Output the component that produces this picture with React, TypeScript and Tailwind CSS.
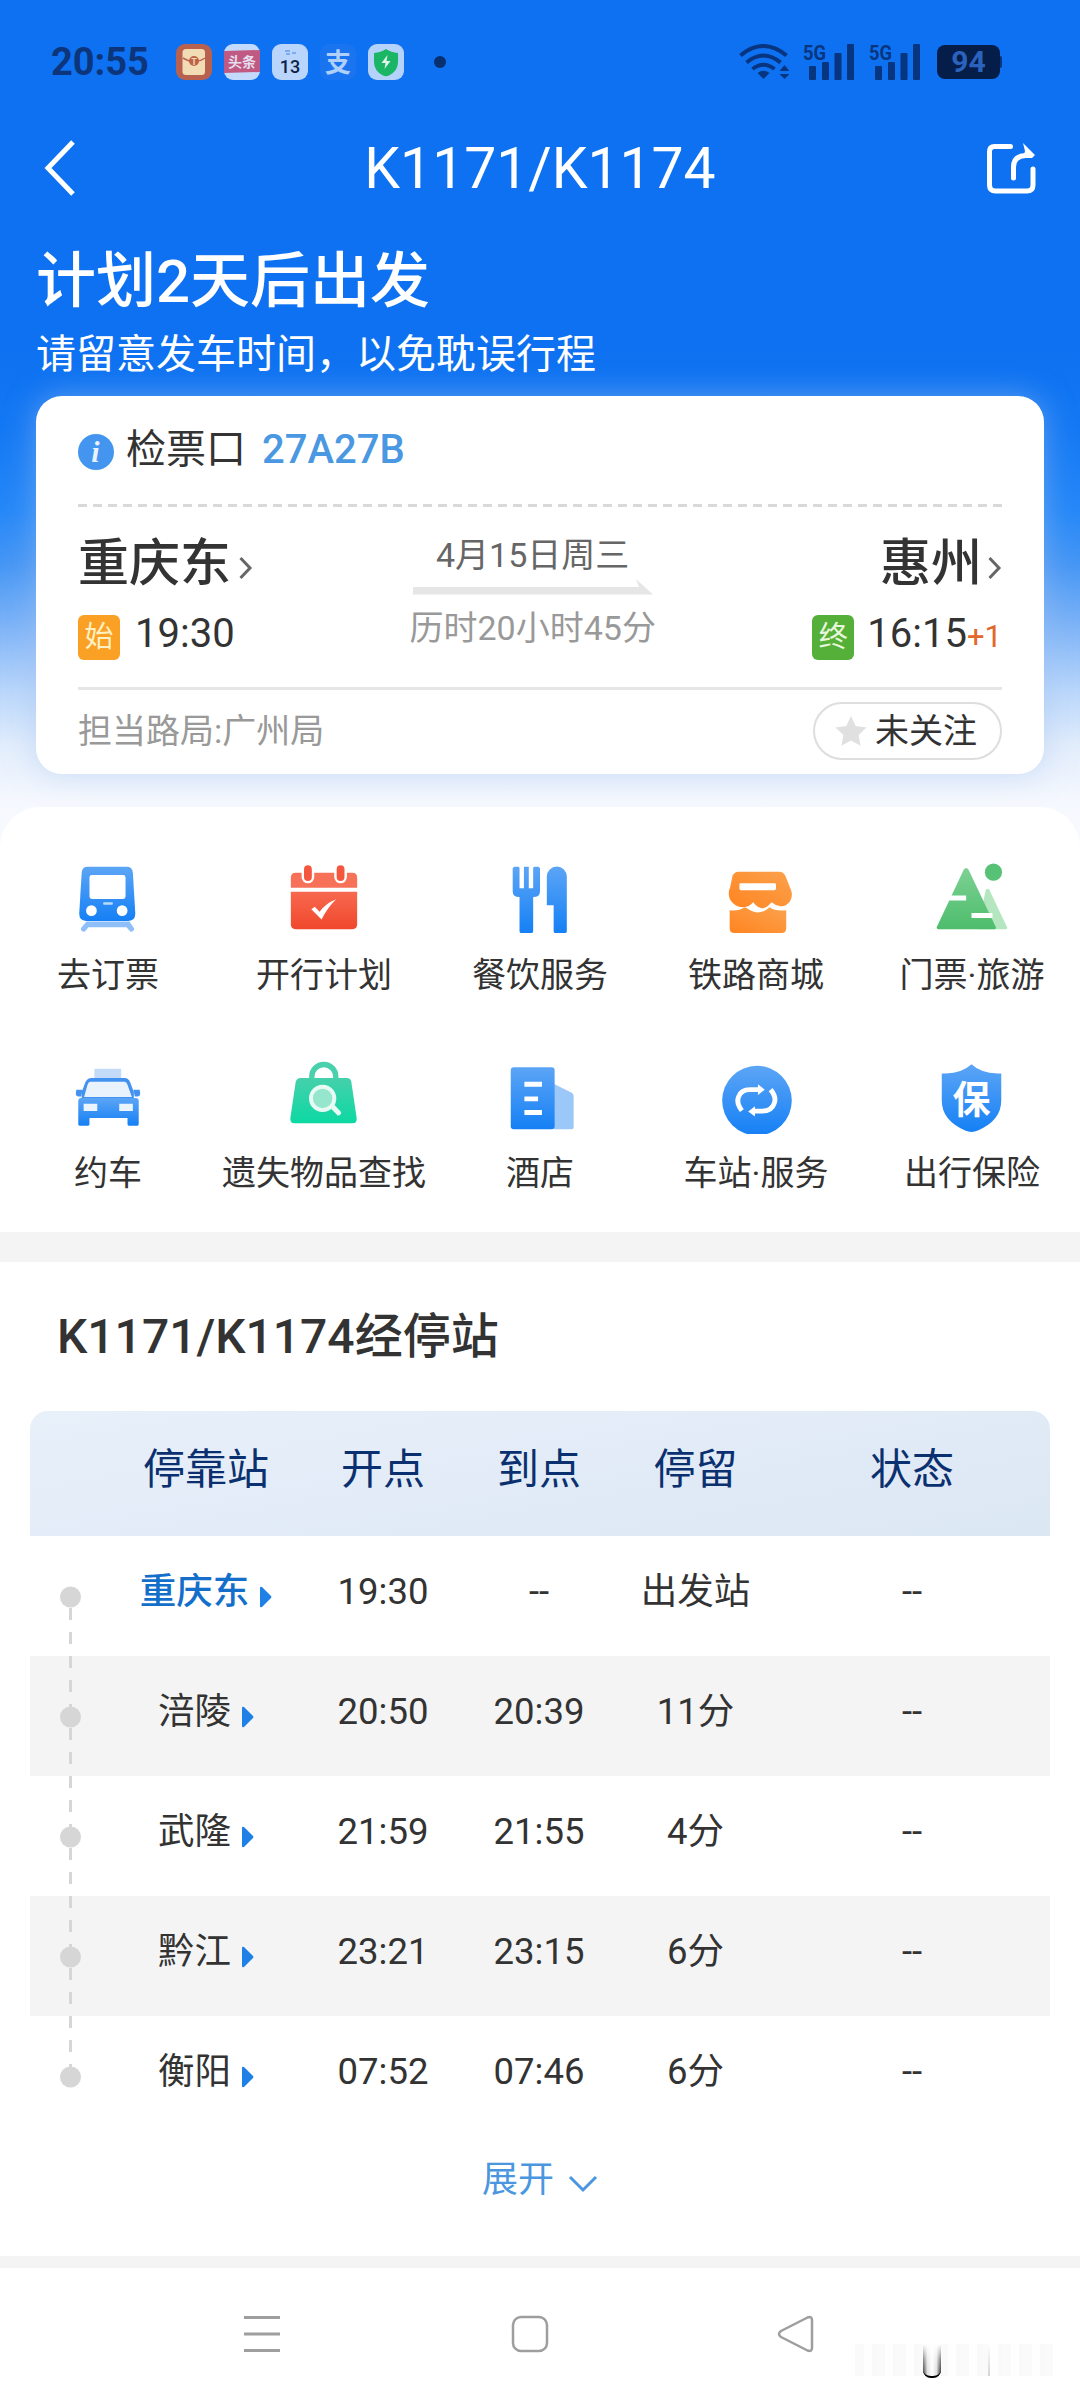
import React from 'react';

interface Service {
  label: string;
  icon: React.ReactNode;
}

interface Stop {
  name: string;
  depart: string;
  arrive: string;
  stay: string;
  status: string;
}

const TrainIcon = () => (
  <svg viewBox="0 0 80 80" className="h-20 w-20">
    <path d="M18 65h44l4 6a2.5 2.5 0 0 1-4 3.5L59 71H20l-3 3.5a2.5 2.5 0 0 1-4-3.5z" fill="#8fbff8" />
    <path d="M19 9h40q6 0 6.5 6l2.5 42q0 7.500-7 7.500H17.500q-7 0-7-7.500l2.500-42q.5-6 6-6z" fill="url(#blue)" />
    <rect x="21" y="17.500" width="37" height="24.500" rx="2.500" fill="#fff" />
    <rect x="35" y="45.500" width="10" height="2.500" rx="1" fill="#b9dafb" />
    <circle cx="23" cy="54" r="5.500" fill="#fff" />
    <circle cx="54.500" cy="54" r="5.500" fill="#fff" />
  </svg>
);

const CalendarIcon = () => (
  <svg viewBox="0 0 80 80" className="h-20 w-20">
    <path d="M11 15h58q5 0 5 5v10.500H6V20q0-5 5-5z" fill="#f77158" />
    <path d="M6 34.500h68V68q0 5-5 5H11q-5 0-5-5z" fill="url(#red)" />
    <rect x="17" y="4" width="13" height="22" rx="6.500" fill="#fff" />
    <rect x="50.500" y="4" width="13" height="22" rx="6.500" fill="#fff" />
    <rect x="19.500" y="7.500" width="8" height="16" rx="4" fill="#f4573d" />
    <rect x="53" y="7.500" width="8" height="16" rx="4" fill="#f4573d" />
    <path d="M27 52.500l3.500-2.500 5 5q6-8.500 17-12.800Q44 50 37.500 63z" fill="#fff" />
  </svg>
);

const FoodIcon = () => (
  <svg viewBox="0 0 80 80" className="h-20 w-20">
    <path d="M13.500 9h4.500l1 1v21h4.500V9h5v22H33V10l1-1h4.500l1.500 1.500V34q0 6-7 6v35q0 2-2 2H21q-2 0-2-2V40q-7 0-7-6V10.500z" fill="url(#blue)" />
    <path d="M47 48.500V19a10.200 10.200 0 0 1 20.500 0v56q0 2-2 2H56q-2 0-2-2V48.500z" fill="url(#blue)" />
  </svg>
);

const ShopIcon = () => (
  <svg viewBox="0 0 80 80" className="h-20 w-20">
    <path d="M22 14h42q4 0 6 4l6 15q2 6-1 11-4 6-10 5.500-5-.5-9-4-5 6-9.500 6t-9.500-6q-4 5-10 5-6.500 0-10.500-4-7-7-3-16.500L16 18q2-4 6-4z" fill="url(#orange)" />
    <path d="M13 53.500q8 1.500 16-3 7 5 12.500 5.500 6.500 0 12.500-5.500 6 4.500 17 3V72q0 5-5 5H18q-5 0-5-5z" fill="url(#orange)" />
    <rect x="23" y="26" width="37.500" height="7" rx="1.500" fill="#fff" />
  </svg>
);

const TravelIcon = () => (
  <svg viewBox="0 0 80 80" className="h-20 w-20">
    <path d="M54 33q2-3 4 0l18 38q.5 2-1.500 2H46z" fill="#b4e6c0" />
    <path d="M31.500 12q2.500-3.500 5 0l28 59q.5 2-1.500 2H6q-3 0-2-2.500z" fill="url(#green)" />
    <circle cx="62" cy="14.500" r="8.800" fill="#57c176" />
    <path d="M16 38.500h18v5H16zM39.500 56.500H61v5H39.500z" fill="#fff" />
  </svg>
);

const TaxiIcon = () => (
  <svg viewBox="0 0 80 80" className="h-20 w-20">
    <rect x="26" y="13" width="27.500" height="10" rx="1" fill="#c3dbf8" />
    <path d="M23 22.500h34q4 0 5.500 4l4 10.500v6H13v-6l4-10.500q2-4 6-4z" fill="#4392f0" />
    <path d="M22 26.500h35q2 0 3 3l4.500 12.500h-49L19 29.500q1-3 3-3z" fill="#e9f3fd" />
    <path d="M7.500 34.500h6.500l-1.500 7H10q-3 0-3-3zM72.500 34.500H66l1.500 7H70q3 0 3-3z" fill="#4392f0" />
    <path d="M12.500 43h56q3 0 3 3v24q0 1.500-1.500 1.500h-8.500q-1.500 0-1.500-1.500v-6.500H21V70q0 1.500-1.500 1.500H11q-1.500 0-1.500-1.500V46q0-3 3-3z" fill="url(#blue)" />
    <path d="M15 49h14v7.500H15zM51.500 49h14v7.500h-14z" fill="#eaf4fe" />
  </svg>
);

const LostIcon = () => (
  <svg viewBox="0 0 80 80" className="h-20 w-20">
    <path d="M27.500 25v-4a12.300 12.300 0 0 1 24.600 0v4" fill="none" stroke="#48d1ac" strokeWidth="5.500" />
    <path d="M16 22.500h47.500q4 0 4.500 4l5.500 37q.5 5.500-4 5.500h-60q-4.500 0-4-5.500l5.500-37q1-4 5-4z" fill="url(#teal)" />
    <path d="M47 50l8 8.500" stroke="#e7fbf4" strokeWidth="5" strokeLinecap="round" />
    <circle cx="38.600" cy="43.500" r="12" fill="#96e6cd" stroke="#e7fbf4" strokeWidth="4" />
  </svg>
);

const HotelIcon = () => (
  <svg viewBox="0 0 80 80" className="h-20 w-20">
    <path d="M54 28.500l17 8.500q3.500 1.500 3.500 4.500V73q0 2-2 2H54z" fill="#9bc8f9" />
    <rect x="10" y="11.500" width="45" height="63.500" rx="3" fill="url(#blue)" />
    <path d="M24 26.500h18v5H24zM24 41.500h14v5H24zM24 55.500h18v5H24z" fill="#fff" />
  </svg>
);

const StationIcon = () => (
  <svg viewBox="0 0 80 80" className="h-20 w-20">
    <circle cx="41" cy="45.700" r="35.700" fill="url(#blue)" />
    <g fill="none" stroke="#fff" strokeWidth="5">
      <path d="M25.500 56q-6-8-3.500-14 2.500-7.500 12-7.500h9" />
      <path d="M55 34.500q6.500 8 3.500 14.500-2.500 7.500-12 7.500H38" />
    </g>
    <path d="M42 29l7 5.500-7 5.500zM39 51.500L32 57l7 5z" fill="#fff" />
  </svg>
);

const InsuranceIcon = () => (
  <svg viewBox="0 0 80 80" className="h-20 w-20">
    <path d="M39.500 8.500Q49 17.500 66 18h4v28q0 20-24 30.500-6.500 3-13 0Q9 66 9 46V18h4q17-.5 26.500-9.500z" fill="url(#blue)" />
    <text x="39.500" y="58" textAnchor="middle" fontSize="39" fontWeight="700" fill="#fff">保</text>
  </svg>
);

const services: Service[] = [
  { label: '去订票', icon: <TrainIcon /> },
  { label: '开行计划', icon: <CalendarIcon /> },
  { label: '餐饮服务', icon: <FoodIcon /> },
  { label: '铁路商城', icon: <ShopIcon /> },
  { label: '门票·旅游', icon: <TravelIcon /> },
  { label: '约车', icon: <TaxiIcon /> },
  { label: '遗失物品查找', icon: <LostIcon /> },
  { label: '酒店', icon: <HotelIcon /> },
  { label: '车站·服务', icon: <StationIcon /> },
  { label: '出行保险', icon: <InsuranceIcon /> }
];

const stops: Stop[] = [
  { name: '重庆东', depart: '19:30', arrive: '--', stay: '出发站', status: '--' },
  { name: '涪陵', depart: '20:50', arrive: '20:39', stay: '11分', status: '--' },
  { name: '武隆', depart: '21:59', arrive: '21:55', stay: '4分', status: '--' },
  { name: '黔江', depart: '23:21', arrive: '23:15', stay: '6分', status: '--' },
  { name: '衡阳', depart: '07:52', arrive: '07:46', stay: '6分', status: '--' }
];

// Shared gradients referenced by the service icons
const Gradients = () => (
  <svg className="absolute h-0 w-0">
    <defs>
      <linearGradient id="blue" x1="0" y1="0" x2="0" y2="1">
        <stop offset="0" stopColor="#5ca5f6" />
        <stop offset="1" stopColor="#1580f5" />
      </linearGradient>
      <linearGradient id="red" x1="0" y1="0" x2="0" y2="1">
        <stop offset="0" stopColor="#f7694f" />
        <stop offset="1" stopColor="#f0482c" />
      </linearGradient>
      <linearGradient id="orange" x1="1" y1="0" x2="0" y2="1">
        <stop offset="0" stopColor="#fba24d" />
        <stop offset="1" stopColor="#ff8420" />
      </linearGradient>
      <linearGradient id="green" x1="0" y1="0" x2="0" y2="1">
        <stop offset="0" stopColor="#7dd193" />
        <stop offset="1" stopColor="#4dbd6c" />
      </linearGradient>
      <linearGradient id="teal" x1="0" y1="0" x2="0" y2="1">
        <stop offset="0" stopColor="#45d0ab" />
        <stop offset="1" stopColor="#0cd9a3" />
      </linearGradient>
    </defs>
  </svg>
);

const Signal = () => (
  <svg viewBox="0 0 54 40" className="h-10 w-[54px]" fill="#08357f">
    <text x="0" y="18" fontSize="21" fontWeight="700" textLength="23" lengthAdjust="spacingAndGlyphs">5G</text>
    <rect x="6" y="24" width="7" height="14" rx="1" />
    <rect x="19" y="20" width="7" height="18" rx="1" />
    <rect x="31.500" y="11" width="7" height="27" rx="1" />
    <rect x="44" y="2" width="7" height="36" rx="1" />
  </svg>
);

const StatusBar = () => (
  <div className="flex h-[124px] items-center pl-[51px] pr-[78px]">
    <span className="w-[125px] text-[38px] font-bold leading-none text-[#0c357b]">20:55</span>
    <div className="flex items-center gap-3">
      <svg viewBox="0 0 36 36" className="h-9 w-9">
        <rect width="36" height="36" rx="9" fill="#b8614f" />
        <rect x="6.500" y="5" width="22.500" height="26" rx="3.500" fill="#f2dcb5" />
        <path d="M7 14q5 3 8 3m6 0q4 0 8-3" stroke="#b8614f" strokeWidth="1.500" fill="none" />
        <circle cx="18" cy="17" r="5" fill="#c06248" />
        <text x="18" y="20.500" textAnchor="middle" fontSize="9" fontWeight="700" fill="#f2dcb5">T</text>
      </svg>
      <svg viewBox="0 0 36 36" className="h-9 w-9">
        <rect width="36" height="36" rx="9" fill="#c3dafc" />
        <path d="M0 7l36-1v22L0 29z" fill="#c05a82" />
        <text x="18" y="23" textAnchor="middle" fontSize="14" fontWeight="700" fill="#e5dff0">头条</text>
      </svg>
      <svg viewBox="0 0 36 36" className="h-9 w-9">
        <rect width="36" height="36" rx="9" fill="#b9d5fc" />
        <path d="M13 7h5M14 10h4M20 9h4" stroke="#6a9cf0" strokeWidth="1.500" />
        <text x="18" y="29" textAnchor="middle" fontSize="18" fontWeight="500" fill="#0b2246">13</text>
      </svg>
      <svg viewBox="0 0 36 36" className="h-9 w-9">
        <rect width="36" height="36" rx="9" fill="#1a74f0" />
        <text x="18" y="27.500" textAnchor="middle" fontSize="26" fontWeight="700" fill="#aed0fb">支</text>
      </svg>
      <svg viewBox="0 0 36 36" className="h-9 w-9">
        <rect width="36" height="36" rx="9" fill="#b5d3fa" />
        <path d="M18 5q5 3.500 12 4v9q0 9-9 13.500-3 1.500-6 0Q6 27 6 18V9q7-.5 12-4z" fill="#1bb566" />
        <path d="M19.500 11l-6 8h4l-1 6 6-8h-4z" fill="#dff5ec" />
      </svg>
      <span className="ml-[18px] h-3 w-3 rounded-full bg-[#08306f]" />
    </div>
    <div className="ml-auto flex items-center">
      <svg viewBox="0 0 50 36" className="h-9 w-[50px]" fill="none" stroke="#08357f" strokeWidth="4">
        <path d="M1.500 11.500q22.500-19 46 0M7.500 18.500q17-14 34 0M13.500 25q11-8.500 22 0" />
        <path d="M24.500 35l-6-6q6-4.500 12 0z" fill="#08357f" stroke="none" />
        <path d="M45.500 21l5 6h-10zM45.500 35l5-5h-10z" fill="#08357f" stroke="none" />
      </svg>
      <div className="ml-3.5 flex gap-3">
        <Signal />
        <Signal />
      </div>
      <div className="ml-[14px] flex h-[34px] w-[63px] items-center justify-center rounded-[8px] bg-[#051d49] text-[30px] font-bold leading-none text-[#2b62bd]">
        94
      </div>
      <span className="h-3 w-0.5 rounded-r bg-[#08357f]" />
    </div>
  </div>
);

const TitleBar = () => (
  <div className="flex h-[88px] items-center justify-between pl-[44px] pr-[44px]">
    <svg viewBox="0 0 50 56" className="h-14 w-[50px]" fill="none" stroke="#fff" strokeWidth="5">
      <path d="M29 2L4 28l25 26" />
    </svg>
    <h1 className="text-[57px] leading-none text-white">K1171/K1174</h1>
    <svg viewBox="0 0 50 52" className="h-[52px] w-[50px]" fill="none" stroke="#fff" strokeWidth="5" strokeLinecap="round" strokeLinejoin="round">
      <path d="M24.500 4.500H8.500q-5 0-5 5V43q0 6 6 6H41q6 0 6-6V27" />
      <path d="M27.500 36V25q0-11 12-11.500h4" />
      <path d="M37 1l12 12-3 3h-9l2-7z" fill="#fff" stroke="none" />
    </svg>
  </div>
);

const Chevron = () => (
  <svg viewBox="0 0 14 24" className="h-6 w-3.5" fill="none" stroke="#666" strokeWidth="3">
    <path d="M1.500 2l9.500 10-9.500 10" />
  </svg>
);

const TripCard = () => (
  <div className="mx-9 flex h-[378px] flex-col rounded-[26px] bg-white px-[42px] shadow-[0_0_30px_rgba(165,195,240,0.5)]">
    <div className="flex h-[108px] items-center text-[40px] leading-none">
      <svg viewBox="0 0 36 36" className="mt-1 h-9 w-9">
        <circle cx="18" cy="18" r="18" fill="#4395f0" />
        <text x="17.500" y="27.500" textAnchor="middle" fontFamily="Liberation Serif, serif" fontStyle="italic" fontWeight="700" fontSize="30" fill="#e8f3fe">i</text>
      </svg>
      <span className="ml-3 text-[#333]">检票口</span>
      <span className="ml-4 font-medium text-[#4a98e2]">27A27B</span>
    </div>
    <div className="h-[3px] bg-[repeating-linear-gradient(90deg,#d9d9d9_0_9px,transparent_9px_15px)]" />
    <div className="flex h-[180px] justify-between">
      <div className="pt-[30px]">
        <div className="flex h-[52px] items-center">
          <span className="text-[51px] font-medium leading-none text-[#333]">重庆东</span>
          <span className="ml-2 mt-2.5"><Chevron /></span>
        </div>
        <div className="mt-[26px] flex items-center">
          <span className="flex h-[45px] w-[42px] items-center justify-center rounded-md bg-[#faa024] text-[29px] leading-none text-[#fdf1c4]">始</span>
          <span className="ml-[15px] -mt-2 text-[40px] leading-none text-[#333]">19:30</span>
        </div>
      </div>
      <div className="flex flex-col items-center pt-[31px]">
        <span className="text-[34px] leading-none text-[#666]">4月15日周三</span>
        <svg viewBox="0 0 240 16" className="mt-[7px] h-4 w-[240px]" fill="#e6e6e6">
          <path d="M0 8h226l-3-8 17 15.500H0z" />
        </svg>
        <span className="mt-4 text-[34px] leading-none text-[#999]">历时20小时45分</span>
      </div>
      <div className="flex flex-col items-end pt-[30px]">
        <div className="flex h-[52px] items-center">
          <span className="text-[51px] font-medium leading-none text-[#333]">惠州</span>
          <span className="ml-1.5 mt-2.5"><Chevron /></span>
        </div>
        <div className="mt-[26px] flex items-center">
          <span className="flex h-[45px] w-[42px] items-center justify-center rounded-md bg-[#55b03a] text-[29px] leading-none text-[#e8f7dc]">终</span>
          <span className="ml-[13px] -mt-2 text-[40px] leading-none text-[#333]">
            16:15<span className="text-[31px] text-[#e2672a]">+1</span>
          </span>
        </div>
      </div>
    </div>
    <div className="h-[3px] bg-[#e6e6e6]" />
    <div className="flex h-[81px] items-center justify-between text-[34px] leading-none">
      <span className="text-[#999]">担当路局:广州局</span>
      <button className="flex h-[58px] w-[189px] items-center rounded-full border-2 border-[#dedede] pl-[20px] text-[#333]">
        <svg viewBox="0 0 32 30" className="h-[30px] w-8" fill="#e0e0e0">
          <path d="M16 0l4.700 10 10.800 1.400-7.900 7.500 2 10.800L16 24.500l-9.600 5.200 2-10.800L.5 11.400 11.300 10z" />
        </svg>
        <span className="ml-2">未关注</span>
      </button>
    </div>
  </div>
);

const ServiceGrid = () => (
  <div className="mt-[33px] grid h-[425px] grid-cols-5 content-start gap-y-[64px] rounded-t-[40px] bg-white pt-[51px]">
    {services.map((service) => (
      <div key={service.label} className="flex h-[134px] flex-col items-center">
        {service.icon}
        <span className="mt-[22px] whitespace-nowrap text-[34px] leading-none text-[#333]">{service.label}</span>
      </div>
    ))}
  </div>
);

const Rail = ({ first, last }: { first: boolean; last: boolean }) => (
  <svg viewBox="0 0 77 120" className="h-[120px] w-[77px]">
    <path
      d={last ? 'M40.500 0v60' : first ? 'M40.500 72v48' : 'M40.500 0v120'}
      stroke="#d6d6d6"
      strokeWidth="3"
      strokeDasharray="12 12"
    />
    <circle cx="40.500" cy="61" r="10.500" fill="#d6d6d6" />
  </svg>
);

const StopTable = () => (
  <div className="mx-[30px] text-center">
    <div className="grid h-[125px] grid-cols-[77px_198px_156px_156px_157px_276px] items-center rounded-t-[18px] bg-[linear-gradient(170deg,#e8f0fa,#dce7f4)] pb-2 text-[42px] leading-none text-[#0b306f]">
      <span />
      <span>停靠站</span>
      <span>开点</span>
      <span>到点</span>
      <span>停留</span>
      <span>状态</span>
    </div>
    {stops.map((stop, index) => (
      <div
        key={stop.name}
        className="grid h-[120px] grid-cols-[77px_198px_156px_156px_157px_276px] items-center text-[36.5px] leading-none text-[#333] even:bg-white odd:bg-[#f4f4f4]"
      >
        <Rail first={index === 0} last={index === stops.length - 1} />
        <div className="-mt-2 flex items-center justify-center">
          <span className={index === 0 ? 'font-medium text-[#136fc9]' : ''}>{stop.name}</span>
          <svg viewBox="0 0 12 22" className="ml-[11px] mt-2.5 h-[22px] w-3" fill="#1f80e6">
            <path d="M0 2q0-2 2-1l9 9q1 1 0 2l-9 9q-2 1-2-1z" />
          </svg>
        </div>
        <span className="-mt-2">{stop.depart}</span>
        <span className="-mt-2">{stop.arrive}</span>
        <span className="-mt-2">{stop.stay}</span>
        <span className="-mt-2">{stop.status}</span>
      </div>
    ))}
  </div>
);

const NavBar = () => (
  <div className="relative h-[132px] bg-white">
    <div className="flex items-center pt-[46px]">
      <svg viewBox="0 0 40 40" className="ml-[242px] h-10 w-10" stroke="#9e9e9e" strokeWidth="3">
        <path d="M2 3.500h36M2 20h36M2 36.500h36" />
      </svg>
      <svg viewBox="0 0 40 40" className="ml-[228px] h-10 w-10" fill="none" stroke="#9e9e9e" strokeWidth="2.500">
        <rect x="3" y="3" width="34" height="34" rx="8" />
      </svg>
      <svg viewBox="0 0 40 40" className="ml-[226px] h-10 w-10" fill="none" stroke="#9e9e9e" strokeWidth="2.500" strokeLinejoin="round">
        <path d="M5 17L31.500 3.500Q36 2 36 6v28q0 4-4.500 2.500L5 23q-4-3 0-6z" />
      </svg>
    </div>
    {/* faded corner mark */}
    <div className="absolute left-[855px] top-[76px] flex h-8 w-[198px] bg-[repeating-linear-gradient(90deg,#fafafa_0_9px,#fefefe_9px_17px,#f9f9f9_17px_21px)]">
      <div className="ml-[68px] h-[34px] w-[18px] rounded-b-lg bg-[linear-gradient(90deg,#333,#ddd_25%,#fff_50%,#ddd_75%,#222)]">
        <div className="h-full w-full rounded-b-lg border-b-2 border-black bg-linear-to-b from-white via-white/40 to-transparent" />
      </div>
      <span className="ml-[47px] h-8 w-0.5 bg-linear-to-b from-white to-neutral-300" />
    </div>
  </div>
);

export default function App() {
  return (
    <div className="h-[2400px] w-[1080px] overflow-hidden bg-white font-['Roboto','Noto_Sans_CJK_SC',sans-serif]">
      <Gradients />
      <div className="h-[1232px] bg-[linear-gradient(180deg,#0d71f1_0,#0d71f1_350px,#1579f4_430px,#2688f8_510px,#4797f5_565px,#82b6f8_630px,#b9d6fb_690px,#e2edfc_745px,#f5f8fe_800px,#f8fafe_850px)]">
        <StatusBar />
        <TitleBar />
        <div className="flex h-[184px] flex-col px-9 pt-[40px] text-white">
          <h2 className="text-[60px] font-medium leading-[60px]">计划2天后出发</h2>
          <p className="mt-[23px] text-[40px] leading-10">请留意发车时间，以免耽误行程</p>
        </div>
        <TripCard />
        <ServiceGrid />
      </div>
      <div className="h-[30px] bg-[#f4f4f4]" />
      <div className="h-[994px] bg-white">
        <h3 className="flex h-[149px] items-center pl-[57px] text-[48px] font-medium leading-none text-[#333]">
          K1171/K1174经停站
        </h3>
        <StopTable />
        <button className="mx-auto mt-[26px] flex items-center text-[36px] leading-none text-[#4a97df]">
          展开
          <svg viewBox="0 0 30 20" className="ml-3.5 mt-2 h-5 w-[30px]" fill="none" stroke="#4a97df" strokeWidth="3">
            <path d="M2 3l13 13L28 3" />
          </svg>
        </button>
      </div>
      <div className="h-3 bg-[#f4f4f4]" />
      <NavBar />
    </div>
  );
}
